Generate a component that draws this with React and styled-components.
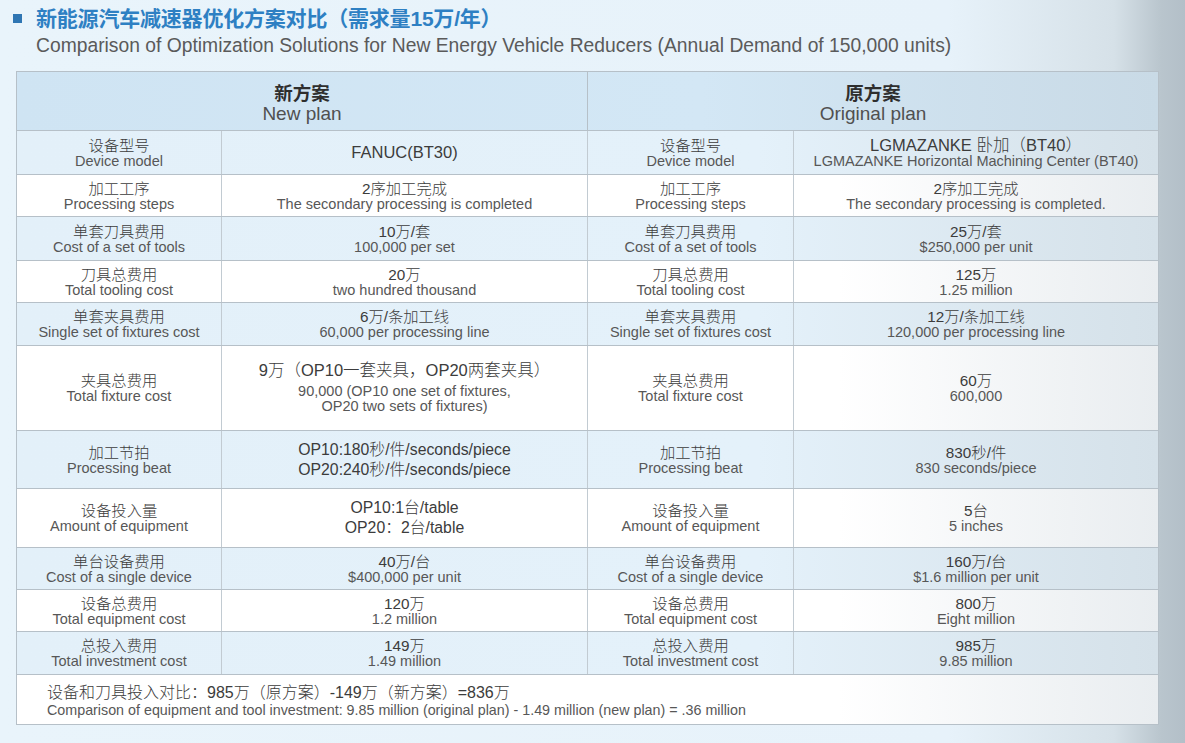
import styled, { createGlobalStyle } from 'styled-components';

const rows = [
    { zh: '设备型号', en: 'Device model', h: 44,
      a: [{ t: 'FANUC(BT30)', big: true, wide: true }],
      b: [{ t: 'LGMAZANKE 卧加（BT40）', big: true, wide: true }, { t: 'LGMAZANKE Horizontal Machining Center (BT40)' }] },
    { zh: '加工工序', en: 'Processing steps', h: 42,
      a: [{ t: '2序加工完成', big: true }, { t: 'The secondary processing is completed' }],
      b: [{ t: '2序加工完成', big: true }, { t: 'The secondary processing is completed.' }] },
    { zh: '单套刀具费用', en: 'Cost of a set of tools', h: 44,
      a: [{ t: '10万/套', big: true }, { t: '100,000 per set' }],
      b: [{ t: '25万/套', big: true }, { t: '$250,000 per unit' }] },
    { zh: '刀具总费用', en: 'Total tooling cost', h: 42,
      a: [{ t: '20万', big: true }, { t: 'two hundred thousand' }],
      b: [{ t: '125万', big: true }, { t: '1.25 million' }] },
    { zh: '单套夹具费用', en: 'Single set of fixtures cost', h: 43,
      a: [{ t: '6万/条加工线', big: true }, { t: '60,000 per processing line' }],
      b: [{ t: '12万/条加工线', big: true }, { t: '120,000 per processing line' }] },
    { zh: '夹具总费用', en: 'Total fixture cost', h: 85,
      a: [{ t: '9万（OP10一套夹具，OP20两套夹具）', big: true, wide: true, gap: true }, { t: '90,000 (OP10 one set of fixtures,' }, { t: 'OP20 two sets of fixtures)' }],
      b: [{ t: '60万', big: true }, { t: '600,000' }] },
    { zh: '加工节拍', en: 'Processing beat', h: 58,
      a: [{ t: 'OP10:180秒/件/seconds/piece', big: true, tall: true }, { t: 'OP20:240秒/件/seconds/piece', big: true, tall: true }],
      b: [{ t: '830秒/件', big: true }, { t: '830 seconds/piece' }] },
    { zh: '设备投入量', en: 'Amount of equipment', h: 59,
      a: [{ t: 'OP10:1台/table', big: true, tall: true }, { t: 'OP20：2台/table', big: true, tall: true }],
      b: [{ t: '5台', big: true }, { t: '5 inches' }] },
    { zh: '单台设备费用', en: 'Cost of a single device', h: 42,
      a: [{ t: '40万/台', big: true }, { t: '$400,000 per unit' }],
      b: [{ t: '160万/台', big: true }, { t: '$1.6 million per unit' }] },
    { zh: '设备总费用', en: 'Total equipment cost', h: 42,
      a: [{ t: '120万', big: true }, { t: '1.2 million' }],
      b: [{ t: '800万', big: true }, { t: 'Eight million' }] },
    { zh: '总投入费用', en: 'Total investment cost', h: 43,
      a: [{ t: '149万', big: true }, { t: '1.49 million' }],
      b: [{ t: '985万', big: true }, { t: '9.85 million' }] },
];

function Value({ lines }) {
    return (
        <Cell>
            {lines.map((l, i) => (
                <Line
                    key={i}
                    big={l.big ? 'yes' : 'no'}
                    tall={l.tall ? 'yes' : 'no'}
                    wide={l.wide ? 'yes' : 'no'}
                    gap={l.gap ? 'yes' : 'no'}
                >
                    {l.t}
                </Line>
            ))}
        </Cell>
    );
}

function Label({ zh, en }) {
    return (
        <Cell>
            <Line big="yes">{zh}</Line>
            <Line>{en}</Line>
        </Cell>
    );
}

export default function App() {
    return (
        <Page>
            <GlobalStyle />
            <Title>
                <Bullet />
                <h1>新能源汽车减速器优化方案对比（需求量15万/年）</h1>
            </Title>
            <Subtitle>Comparison of Optimization Solutions for New Energy Vehicle Reducers (Annual Demand of 150,000 units)</Subtitle>
            <Table>
                <HeadRow>
                    <HeadCell>
                        <strong>新方案</strong>
                        <span>New plan</span>
                    </HeadCell>
                    <HeadCell>
                        <strong>原方案</strong>
                        <span>Original plan</span>
                    </HeadCell>
                </HeadRow>
                {rows.map((r, index) => (
                    <Row key={index} h={r.h} shaded={index % 2 === 0 ? 'yes' : 'no'}>
                        <Label zh={r.zh} en={r.en} />
                        <Value lines={r.a} />
                        <Label zh={r.zh} en={r.en} />
                        <Value lines={r.b} />
                    </Row>
                ))}
                <Footer>
                    <p>设备和刀具投入对比：985万（原方案）-149万（新方案）=836万</p>
                    <span>Comparison of equipment and tool investment: 9.85 million (original plan) - 1.49 million (new plan) = .36 million</span>
                </Footer>
            </Table>
        </Page>
    );
}

const GlobalStyle = createGlobalStyle`
    html, body {
        margin: 0;
        padding: 0;
    }
    body {
        font-family: "Liberation Sans", "Noto Sans CJK SC", sans-serif;
    }
`

const Page = styled.div`
    width: 1185px;
    height: 743px;
    overflow: hidden;
    box-sizing: border-box;
    padding: 6px 0 0 16px;
    background: linear-gradient(90deg, #e9f4fb 0%, #e7f2fa 80%, #d6e1e8 94%, #b9c5cd 98%, #b3bfc8 100%);
`

const Title = styled.div`
    display: flex;
    align-items: center;
    gap: 14px;
    margin-left: -3px;
    h1 {
        margin: 0;
        font-size: 21px;
        line-height: 25px;
        font-weight: bold;
        color: #2e80c3;
        letter-spacing: -0.2px;
    }
`

const Bullet = styled.div`
    width: 9px;
    height: 9px;
    background: #2f76b3;
`

const Subtitle = styled.div`
    margin: 3px 0 0 20px;
    font-size: 19.3px;
    line-height: 24px;
    color: #5a5a5a;
`

const Table = styled.div`
    width: 1143px;
    margin-top: 13px;
    border: 1px solid #b6c0c8;
    box-sizing: border-box;
    background: #fff;
`

const HeadRow = styled.div`
    display: grid;
    grid-template-columns: 570px 1fr;
    height: 58px;
    background: linear-gradient(90deg, #cfe4f3 0%, #d3e7f5 60%, #c9dae6 100%);
    border-bottom: 1px solid #b6c0c8;
`

const HeadCell = styled.div`
    display: flex;
    flex-direction: column;
    align-items: center;
    justify-content: center;
    padding-top: 4px;
    & + & {
        border-left: 1px solid #b6c0c8;
    }
    strong {
        font-size: 18.5px;
        line-height: 21px;
        color: #2e2e2e;
    }
    span {
        font-size: 19px;
        line-height: 20px;
        color: #505050;
    }
`

const Row = styled.div`
    display: grid;
    grid-template-columns: 204px 366px 206px 1fr;
    height: ${(props) => props.h}px;
    box-sizing: border-box;
    border-bottom: 1px solid #b6c0c8;
    background: ${(props) => (props.shaded === 'yes'
        ? 'linear-gradient(90deg, #e3f0f9 0%, #e4f1fa 65%, #d5e1e9 100%)'
        : 'linear-gradient(90deg, #ffffff 0%, #ffffff 72%, #e9edf0 100%)')};
`

const Cell = styled.div`
    display: flex;
    flex-direction: column;
    align-items: center;
    justify-content: center;
    text-align: center;
    & + & {
        border-left: 1px solid #c2cbd2;
    }
`

const Line = styled.div`
    font-size: ${(props) => (props.wide === 'yes' ? '16.5px' : props.tall === 'yes' ? '15.8px' : props.big === 'yes' ? '15.3px' : '14.5px')};
    line-height: ${(props) => (props.tall === 'yes' ? '20px' : props.big === 'yes' ? '17px' : '15px')};
    font-weight: 300;
    color: ${(props) => (props.big === 'yes' ? '#3c3c3c' : '#575757')};
    margin-bottom: ${(props) => (props.gap === 'yes' ? '5px' : '0')};
    white-space: nowrap;
`

const Footer = styled.div`
    height: 49px;
    padding: 9px 0 0 30px;
    box-sizing: border-box;
    background: linear-gradient(90deg, #ffffff 0%, #ffffff 72%, #e9edf0 100%);
    p {
        margin: 0;
        font-size: 16px;
        line-height: 18px;
        font-weight: 300;
        color: #3c3c3c;
    }
    span {
        display: block;
        font-size: 14.3px;
        line-height: 17px;
        color: #575757;
    }
`
